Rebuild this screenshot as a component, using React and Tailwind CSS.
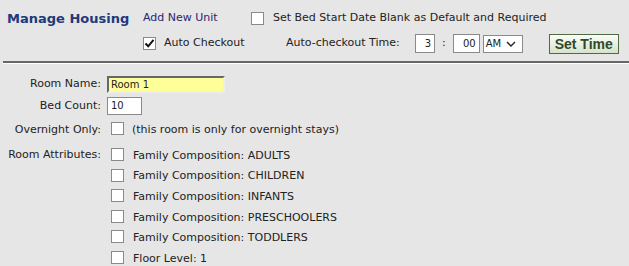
const font = { fontFamily: '"DejaVu Sans", Verdana, sans-serif' };

const Box = ({ checked }) => (
    <span className="inline-flex w-[13px] h-[13px] shrink-0 items-center justify-center border border-[#8a8a8a] bg-white">
        {checked && (
            <svg width="11" height="11" viewBox="0 0 11 11">
                <path d="M1.5 5.5 L4.2 8.3 L9.5 1.8" fill="none" stroke="#111" strokeWidth="2" />
            </svg>
        )}
    </span>
);

const Row = ({ label, children }) => (
    <div className="flex items-center">
        <div className="w-[101px] shrink-0 text-right text-[11px] text-[#222]">{label}</div>
        <div className="flex items-center pl-[6px]">{children}</div>
    </div>
);

const attributes = [
    'Family Composition: ADULTS',
    'Family Composition: CHILDREN',
    'Family Composition: INFANTS',
    'Family Composition: PRESCHOOLERS',
    'Family Composition: TODDLERS',
    'Floor Level: 1',
];

export default function App() {
    return (
        <div className="w-[629px] h-[266px] overflow-hidden bg-[#e6e6e6] text-[#222]" style={font}>
            {/* header */}
            <div className="flex items-center h-[34px] pt-[3px]">
                <div className="w-[143px] pl-[7px] text-[13px] font-bold text-[#1e3a7b]">Manage Housing</div>
                <div className="w-[108px] text-[11px] text-[#2b2470]">Add New Unit</div>
                <Box />
                <span className="ml-[9px] text-[11px]">Set Bed Start Date Blank as Default and Required</span>
            </div>
            <div className="flex items-center h-[19px] pl-[143px]">
                <Box checked />
                <span className="ml-[8px] w-[122px] text-[11px]">Auto Checkout</span>
                <span className="w-[129px] text-[11px]">Auto-checkout Time:</span>
                <div className="flex items-center h-[19px] w-[20px] border border-[#8a8a8a] bg-white justify-end pr-[3px] text-[10px]">3</div>
                <span className="mx-[7px] text-[11px]">:</span>
                <div className="flex items-center h-[19px] w-[27px] border border-[#8a8a8a] bg-white justify-end pr-[3px] text-[10px]">00</div>
                <div className="ml-[3px] flex items-center h-[18px] w-[40px] border border-[#8a8a8a] bg-white pl-[2px] text-[10px]">
                    AM
                    <svg className="ml-[5px]" width="10" height="6" viewBox="0 0 10 6">
                        <path d="M1 1 L5 5 L9 1" fill="none" stroke="#222" strokeWidth="1.4" />
                    </svg>
                </div>
                <button
                    className="ml-[26px] h-[20px] w-[70px] border border-[#4f6b41] bg-gradient-to-b from-[#fbfdf8] to-[#d7e2cb] text-[14px] font-bold text-[#2f4a2a] leading-none"
                    style={{ fontFamily: '"Liberation Sans", Arial, sans-serif' }}
                >
                    Set Time
                </button>
            </div>
            <div className="mt-[8px] ml-[3px] border-t-2 border-[#666] border-b border-b-white" />

            {/* form */}
            <div className="pt-[12px] flex flex-col">
                <Row label="Room Name:">
                    <div className="h-[17px] w-[118px] border-2 border-t-[#666] border-l-[#666] border-r-[#eee] border-b-[#eee] bg-[#ffff99] pl-[2px] text-[10px] leading-[13px]">Room 1</div>
                </Row>
                <div className="h-[4px]" />
                <Row label="Bed Count:">
                    <div className="h-[18px] w-[35px] border border-[#8a8a8a] bg-white pl-[3px] text-[10px] leading-[16px]">10</div>
                </Row>
                <div className="h-[3px]" />
                <Row label="Overnight Only:">
                    <span className="ml-[4px]"><Box /></span>
                    <span className="ml-[8px] text-[11px]">(this room is only for overnight stays)</span>
                </Row>
                <div className="h-[6px]" />
                <div className="flex items-start">
                    <div className="w-[101px] shrink-0 text-right text-[11px] leading-[13px]">Room Attributes:</div>
                    <div className="flex flex-col gap-[7.6px] pl-[10px]">
                        {attributes.map((a) => (
                            <div key={a} className="flex items-center h-[13px]">
                                <Box />
                                <span className="ml-[9px] mt-[3px] text-[11px]">{a}</span>
                            </div>
                        ))}
                    </div>
                </div>
            </div>
        </div>
    );
}
